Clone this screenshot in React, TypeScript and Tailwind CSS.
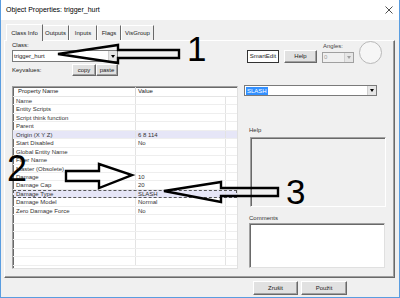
import React from "react";

const rowsData: [string, string][] = [
  ["Name", ""],
  ["Entity Scripts", ""],
  ["Script think function", ""],
  ["Parent", ""],
  ["Origin (X Y Z)", "6 8 114"],
  ["Start Disabled", "No"],
  ["Global Entity Name", ""],
  ["Filter Name", ""],
  ["Master (Obsolete)", ""],
  ["Damage", "10"],
  ["Damage Cap", "20"],
  ["Damage Type", "SLASH"],
  ["Damage Model", "Normal"],
  ["Zero Damage Force", "No"],
];

function DropBtn({ disabled }: { disabled?: boolean }) {
  return (
    <div className="w-[9px] h-full flex items-center justify-center bg-[#e6e6e6] border-l border-[#d0d0d0]">
      <div
        className={
          "w-0 h-0 border-l-[2.5px] border-r-[2.5px] border-t-[3px] border-l-transparent border-r-transparent " +
          (disabled ? "border-t-[#a0a0a0]" : "border-t-black")
        }
      />
    </div>
  );
}

function Btn({ children, w, className = "" }: { children: React.ReactNode; w: string; className?: string }) {
  return (
    <div
      className={
        "flex items-center justify-center h-full bg-[#e1e1e1] border border-t-white border-l-white border-r-[#696969] border-b-[#696969] shadow-[inset_-1px_-1px_0_#a0a0a0] " +
        w +
        " " +
        className
      }
    >
      {children}
    </div>
  );
}

export default function App() {
  const rows = Array.from({ length: 20 }, (_, i) => rowsData[i] ?? ["", ""]);
  return (
    <div className="relative w-[400px] h-[298px] overflow-hidden bg-[#f0f0f0] font-['Liberation_Sans',Arial,sans-serif] text-[6px] text-[#1a1a1a] border-l border-r border-b border-[#5a9de0] flex flex-col">
      {/* title bar */}
      <div className="h-[20px] bg-white flex items-center justify-between pl-[5px] pr-[6px] shrink-0">
        <span className="text-[7px] text-black">Object Properties: trigger_hurt</span>
        <svg width="8" height="8" viewBox="0 0 8 8">
          <path d="M0.5 0.5 L7.5 7.5 M7.5 0.5 L0.5 7.5" stroke="#222" strokeWidth="0.8" />
        </svg>
      </div>

      {/* tabs */}
      <div className="flex items-end h-[20px] pl-[5px] shrink-0">
        <div className="h-[17px] w-[37px] flex items-center justify-center bg-[#f0f0f0] border-l border-t border-white border-r border-r-[#696969] relative top-[1px] z-10">
          Class Info
        </div>
        <div className="h-[15px] w-[26px] flex items-center justify-center border-t border-white border-r border-r-[#696969]">Outputs</div>
        <div className="h-[15px] w-[28px] flex items-center justify-center border-l border-t border-white border-r border-r-[#696969]">Inputs</div>
        <div className="h-[15px] w-[24px] flex items-center justify-center border-l border-t border-white border-r border-r-[#696969]">Flags</div>
        <div className="h-[15px] w-[33px] flex items-center justify-center border-l border-t border-white border-r border-r-[#696969]">VisGroup</div>
      </div>

      {/* panel */}
      <div className="ml-[3px] w-[391px] h-[238px] shrink-0 border-l border-t border-white border-r border-r-[#696969] border-b border-b-[#696969] shadow-[inset_-1px_-1px_0_#a0a0a0] flex">
        {/* left column */}
        <div className="ml-[7px] w-[226px] flex flex-col">
          <div className="h-[8px] leading-[8px] mt-[0px]">Class:</div>
          <div className="mt-[1px] w-[106px] h-[12px] bg-white border border-[#7a7a7a] flex items-center">
            <span className="flex-1 pl-[1px]">trigger_hurt</span>
            <DropBtn />
          </div>
          <div className="mt-[2px] h-[12px] flex items-center">
            <span className="w-[60px]">Keyvalues:</span>
            <Btn w="w-[24px]">copy</Btn>
            <Btn w="w-[22px]">paste</Btn>
          </div>
          {/* table */}
          <div className="mt-[10px] h-[183px] bg-white border border-t-[#a0a0a0] border-l-[#a0a0a0] border-r-[#e0e0e0] border-b-[#e0e0e0] shadow-[inset_1px_1px_0_#696969] overflow-hidden flex flex-col">
            <div className="h-[10px] shrink-0 flex items-center border-b border-[#e5e5e5]">
              <div className="w-[122px] pl-[5px]">Property Name</div>
              <div className="flex-1 pl-[2px] h-full flex items-center border-l border-[#d5d5d5]">Value</div>
            </div>
            {rows.map(([n, v], i) => {
              const hl = i === 4 || i === 11;
              return (
                <div
                  key={i}
                  className={
                    "h-[8.45px] shrink-0 flex leading-[8px] " +
                    (hl ? "bg-[#e6e6f7] " : "") +
                    (i === 11 ? "outline outline-1 outline-dashed outline-[#555] -outline-offset-1" : "border-b border-[#eeeeee]")
                  }
                >
                  <div className="w-[122px] pl-[3px] text-[#333]">{n}</div>
                  <div className="w-[90px] pl-[2px] border-l border-[#e3e3e3] text-[#333]">{v}</div>
                  <div className="flex-1 border-l border-[#e3e3e3]" />
                </div>
              );
            })}
          </div>
        </div>

        {/* right column */}
        <div className="ml-[6px] w-[143px] flex flex-col">
          <div className="h-[23px] flex">
            <div className="mt-[9px] ml-[3px] h-[13px] w-[32px] bg-white border border-[#333] flex items-center justify-center">SmartEdit</div>
            <div className="mt-[9px] ml-[5px] h-[13px] w-[33px] flex">
              <Btn w="w-[33px]">Help</Btn>
            </div>
            <div className="ml-[5px] w-[32px] flex flex-col">
              <div className="h-[8px] leading-[8px] mt-[1px] pl-[1px] text-[#444]">Angles:</div>
              <div className="mt-[2px] h-[11px] bg-[#f0f0f0] border border-[#a0a0a0] flex items-center">
                <span className="flex-1 pl-[1px] text-[#a0a0a0]">0</span>
                <DropBtn disabled />
              </div>
            </div>
            <div className="ml-[5px] w-[23px] h-[23px] rounded-full border border-[#b8b8b8] bg-[#f6f6f6]" />
          </div>
          <div className="mt-[21px] w-[133px] h-[11px] bg-white border border-[#7a7a7a] flex items-center">
            <div className="flex-1 flex items-center pl-[1px]">
              <span className="bg-[#3390ff] text-white px-[1px] leading-[8px]">SLASH</span>
            </div>
            <DropBtn />
          </div>
          <div className="mt-[30px] ml-[5px] h-[8px] leading-[8px] text-[#333]">Help</div>
          <div className="mt-[3px] ml-[6px] w-[136px] h-[70px] bg-[#f0f0f0] border border-t-[#a0a0a0] border-l-[#a0a0a0] border-r-white border-b-white shadow-[inset_1px_1px_0_#696969]" />
          <div className="mt-[7px] ml-[5px] h-[8px] leading-[8px] text-[#333]">Comments</div>
          <div className="mt-[1px] ml-[5px] w-[136px] h-[45px] bg-white border border-t-[#a0a0a0] border-l-[#a0a0a0] border-r-[#e0e0e0] border-b-[#e0e0e0] shadow-[inset_1px_1px_0_#696969]" />
        </div>
      </div>

      {/* footer buttons */}
      <div className="mt-[3px] h-[14px] flex pl-[252px] gap-[3px]">
        <Btn w="w-[45px]">Zrušit</Btn>
        <Btn w="w-[46px]">Použit</Btn>
      </div>

      {/* annotations */}
      <svg className="absolute left-0 top-0 pointer-events-none" width="400" height="298" viewBox="0 0 400 298">
        <polygon points="57,54 117,45 117,50 178,50 178,58 117,58 117,63" fill="none" stroke="black" strokeWidth="2.4" strokeLinejoin="miter" />
        <polygon points="65,171 98,171 98,164 131,175 98,188 98,181 65,181" fill="none" stroke="black" strokeWidth="2.4" strokeLinejoin="miter" />
        <polygon points="163,191 220,182 220,188 277,188 277,196 220,196 220,202" fill="none" stroke="black" strokeWidth="2.4" strokeLinejoin="miter" />
      </svg>
      <div className="absolute left-[186px] top-[31px] text-[35px] leading-[35px] text-black font-['Liberation_Sans',Arial,sans-serif]">1</div>
      <div className="absolute left-[6px] top-[151px] text-[36px] leading-[36px] text-black font-['Liberation_Sans',Arial,sans-serif]">2</div>
      <div className="absolute left-[285px] top-[174px] text-[35px] leading-[35px] text-black font-['Liberation_Sans',Arial,sans-serif]">3</div>
    </div>
  );
}
